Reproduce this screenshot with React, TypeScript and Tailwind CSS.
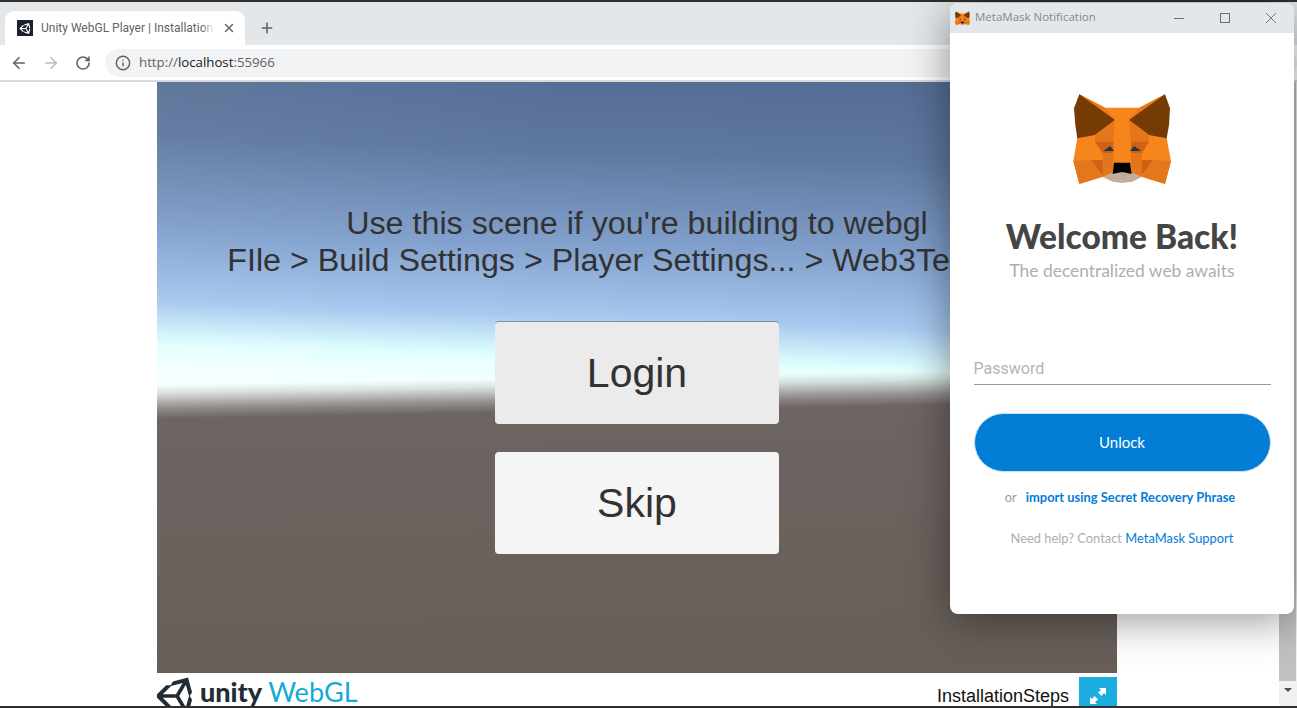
import { ArrowLeft, ArrowRight, RotateCw, Info, Plus, X } from "lucide-react";
import { FaUnity } from "react-icons/fa";

function Fox({ className }: { className: string }) {
  return (
    <svg viewBox="0 0 375 315" className={className}>
      <polygon fill="#f6851b" points="58,28 135,68 238,68 315,28 320,160 333,228 315,297 245,275 215,290 160,290 128,275 58,297 40,228 52,160" />
      <polygon fill="#e9791b" points="58,28 135,68 165,105" />
      <polygon fill="#e9791b" points="315,28 238,68 207,105" />
      <polygon fill="#763a05" points="58,28 42,70 46,120 52,160 105,150 165,105" />
      <polygon fill="#763a05" points="315,28 330,70 327,120 320,160 267,150 207,105" />
      <polygon fill="#e4761b" points="105,150 165,105 160,170 105,170" />
      <polygon fill="#e4761b" points="267,150 207,105 213,170 267,170" />
      <polygon fill="#cd6116" points="105,170 160,170 160,205 128,205" />
      <polygon fill="#cd6116" points="267,170 213,170 213,205 245,205" />
      <polygon fill="#e4751f" points="128,205 160,205 160,235 128,275 128,225" />
      <polygon fill="#e4751f" points="245,205 213,205 213,235 245,275 245,225" />
      <polygon fill="#233447" points="130,198 150,183 163,198" />
      <polygon fill="#233447" points="243,198 223,183 210,198" />
      <polygon fill="#e4761b" points="40,228 95,225 128,275 58,297" />
      <polygon fill="#e4761b" points="333,228 278,225 245,275 315,297" />
      <polygon fill="#cd6116" points="95,225 128,225 128,272" />
      <polygon fill="#cd6116" points="278,225 245,225 245,272" />
      <polygon fill="#c0ad9e" points="128,275 158,262 215,262 245,275 215,290 186,294 160,290" />
      <polygon fill="#e4751f" points="128,275 160,235 158,262" />
      <polygon fill="#e4751f" points="245,275 213,235 215,262" />
      <polygon fill="#000000" points="162,233 210,233 215,267 192,262 181,262 158,267" />
    </svg>
  );
}

function WindowControls() {
  return (
    <div className="flex items-center">
      <svg viewBox="0 0 10 10" className="w-[10px] h-[10px] mr-[36px]">
        <path d="M0 5.5H10" stroke="#6b6e71" strokeWidth="1" />
      </svg>
      <svg viewBox="0 0 10 10" className="w-[10px] h-[10px] mr-[36px]">
        <rect x="0.5" y="0.5" width="9" height="9" fill="none" stroke="#6b6e71" strokeWidth="1" />
      </svg>
      <svg viewBox="0 0 10 10" className="w-[10px] h-[10px]">
        <path d="M0 0L10 10M10 0L0 10" stroke="#6b6e71" strokeWidth="0.9" />
      </svg>
    </div>
  );
}

function MetaMaskWindow() {
  return (
    <div className="absolute left-[950px] top-[3px] w-[344px] h-[611px] rounded-[8px] overflow-hidden bg-white shadow-[0_6px_44px_rgba(0,0,0,0.42)] flex flex-col font-['Lato',sans-serif]">
      <div className="h-[30px] bg-[#e4e7ea] flex items-center pl-[4px] pr-[18px] shrink-0">
        <Fox className="w-[19px] h-[16px] -ml-[1px]" />
        <span className="ml-[3px] -mt-[2px] flex-1 font-['Open_Sans',sans-serif] text-[11.5px] text-[#85888b]">MetaMask Notification</span>
        <WindowControls />
      </div>
      <div className="flex flex-col items-center flex-1">
        <Fox className="w-[125px] h-[105px] mt-[52px]" />
        <h1 className="mt-[26px] text-[33.5px] leading-[40px] font-black text-[#454545]">Welcome Back!</h1>
        <p className="mt-[3px] text-[17.4px] leading-[24px] text-[#aeaeae]">The decentralized web awaits</p>
        <div className="mt-[74px] w-[297px] h-[28px] border-b border-[#999999] font-['Roboto',sans-serif] text-[16px] leading-[24px] text-[#b4b4b4] flex items-start">Password</div>
        <button className="mt-[28px] w-[297px] h-[59px] rounded-full bg-[#037dd6] border border-[#cfe3f3] text-white text-[15px] font-normal">Unlock</button>
        <div className="mt-[15px] mr-[4px] text-[12.9px] leading-[20px] text-[#9b9b9b] flex">
          <span>or</span>
          <span className="ml-[9px] font-bold text-[#037dd6]">import using Secret Recovery Phrase</span>
        </div>
        <div className="mt-[21px] text-[12.9px] leading-[20px] text-[#aeaeae]">
          Need help? Contact <span className="text-[#037dd6]">MetaMask Support</span>
        </div>
      </div>
    </div>
  );
}

function BrowserChrome() {
  return (
    <div className="shrink-0">
      <div className="h-[2px] bg-[#2f2f2f]" />
      <div className="h-[43px] bg-[#e4e7ea] flex items-end pl-[5px]">
        <div className="relative w-[240px] h-[34px] bg-white rounded-t-[9px] flex items-center pl-[12px] pr-[8px] font-['Roboto',sans-serif]">
          <div className="w-[16px] h-[16px] bg-[#1b222d] flex items-center justify-center shrink-0">
            <FaUnity className="w-[13px] h-[13px] text-white" />
          </div>
          <div className="relative ml-[8px] w-[174px] overflow-hidden whitespace-nowrap text-[12px] text-[#5f6368]">
            Unity WebGL Player | InstallationSteps
            <div className="absolute right-0 top-0 bottom-0 w-[14px] bg-gradient-to-r from-transparent to-white" />
          </div>
          <X className="w-[14px] h-[14px] ml-[7px] text-[#5f6368]" strokeWidth={2.4} />
        </div>
        <Plus className="w-[16px] h-[16px] ml-[14px] mb-[9px] text-[#5f6368]" strokeWidth={2.4} />
      </div>
      <div className="h-[35px] bg-white flex items-center pl-[10px]">
        <ArrowLeft className="w-[18px] h-[18px] text-[#5f6368]" strokeWidth={2.2} />
        <ArrowRight className="w-[18px] h-[18px] ml-[14px] text-[#babcbe]" strokeWidth={2.2} />
        <RotateCw className="w-[16px] h-[16px] ml-[15px] text-[#5f6368]" strokeWidth={2.4} />
        <div className="ml-[14px] flex-1 h-[28px] rounded-full bg-[#f1f3f4] flex items-center pl-[10px]">
          <Info className="w-[16px] h-[16px] text-[#5f6368]" strokeWidth={2.2} />
          <span className="ml-[8px] mt-[1px] font-['Open_Sans',sans-serif] text-[13.25px] text-[#5f6368]">
            http://<span className="text-[#202124]">localhost</span>:55966
          </span>
        </div>
      </div>
      <div className="h-[2px] bg-[#d9dadb]" />
    </div>
  );
}

function GameCanvas() {
  return (
    <div className="h-[591px] shrink-0 flex flex-col items-center font-['Liberation_Sans',sans-serif] text-[#323232] bg-[linear-gradient(179deg,rgba(109,101,98,0)_49.8%,rgba(109,101,98,0.2)_51.2%,rgba(109,101,98,0.72)_53.6%,#6d6562_55.4%,#675e58_100%),linear-gradient(128deg,rgba(255,255,255,0.05),rgba(255,255,255,0)_30%),linear-gradient(182deg,#546b92_0%,#5f789f_14%,#84a3cf_30%,#a8c8ef_40.5%,#d6f6fc_46%,#e5ffff_47.6%,#f5ffff_52%,#f5ffff_100%)]">
      <div className="mt-[123px] text-[32.25px] leading-[37px] text-center whitespace-nowrap">
        <div>Use this scene if you're building to webgl</div>
        <div>FIle &gt; Build Settings &gt; Player Settings... &gt; Web3Template</div>
      </div>
      <button className="mt-[42px] pt-[2px] w-[284px] h-[103px] rounded-[4px] bg-[#ebebeb] border-t border-[#7d8ea3] text-[41px]">Login</button>
      <button className="mt-[28px] pt-[2px] w-[284px] h-[102px] rounded-[4px] bg-[#f5f5f5] text-[41px]">Skip</button>
    </div>
  );
}

function Footer() {
  return (
    <div className="flex-1 flex items-start overflow-hidden bg-white">
      <div className="flex items-center -mt-[8px]">
        <FaUnity className="w-[44px] h-[44px] text-[#222c37] -ml-[3px] -mr-[3px] mt-[9px] shrink-0" />
        <span className="ml-[5px] font-['Lato',sans-serif] font-black text-[27px] leading-[38px] text-[#222c37]">unity</span>
        <span className="ml-[6px] font-['Lato',sans-serif] text-[27px] leading-[38px] font-normal text-[#14a9d8]">WebGL</span>
      </div>
      <div className="ml-auto flex">
        <span className="mt-[12px] mr-[10px] font-['Liberation_Sans',sans-serif] text-[18px] leading-[22px] text-[#111111]">InstallationSteps</span>
        <div className="mt-[4px] w-[38px] h-[38px] bg-[#1bade0] flex justify-center">
          <svg viewBox="0 0 16 16" className="w-[16px] h-[16px] mt-[11px]">
            <path d="M9 0H16V7L14 5L11.5 8L8 4.5L11 2Z M7 16H0V9L2 11L4.5 8L8 11.5L5 14Z" fill="white" />
          </svg>
        </div>
      </div>
    </div>
  );
}

function Scrollbar() {
  return (
    <div className="w-[18px] ml-auto bg-[#f1f1f1] flex flex-col">
      <div className="flex-1 flex flex-col">
        <div className="h-[599px] w-[17px] bg-[#c1c1c1]" />
      </div>
      <div className="h-[22px] flex justify-center">
        <svg viewBox="0 0 8 4" className="w-[8px] h-[4px] mt-[4px]">
          <path d="M0 0H8L4 4Z" fill="#505050" />
        </svg>
      </div>
    </div>
  );
}

export default function App() {
  return (
    <div className="relative w-[1297px] h-[708px] overflow-hidden bg-white flex flex-col border-b-2 border-[#2f2f2f]">
      <BrowserChrome />
      <div className="flex-1 flex min-h-0 pl-[157px]">
        <div className="w-[960px] flex flex-col">
          <GameCanvas />
          <Footer />
        </div>
        <Scrollbar />
      </div>
      <MetaMaskWindow />
    </div>
  );
}
